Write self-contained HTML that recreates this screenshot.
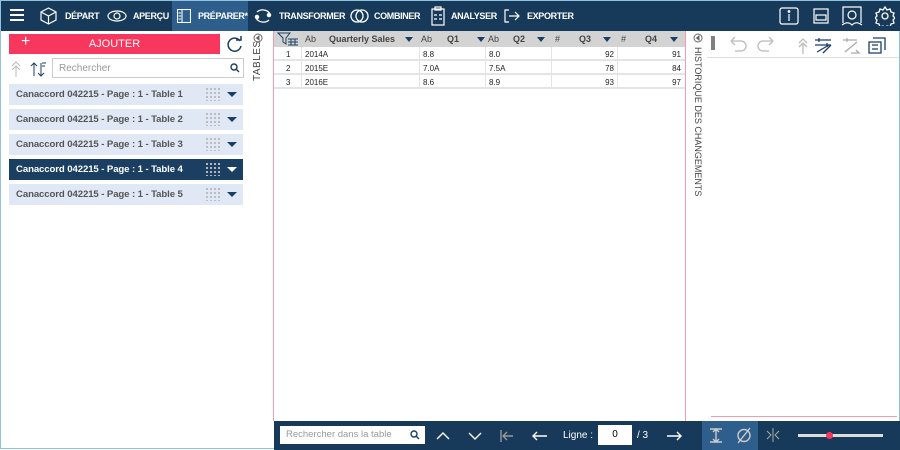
<!DOCTYPE html>
<html><head><meta charset="utf-8"><style>
*{box-sizing:border-box;margin:0;padding:0}
body{width:900px;height:449px;overflow:hidden;background:#fff;font-family:"Liberation Sans",sans-serif;position:relative;border:1px solid #8fc3e0}
.a{position:absolute}
.top{left:0;top:0;width:900px;height:30px;background:#173a5a}
.nav{color:#fff;font-size:9px;font-weight:bold;top:10px;letter-spacing:-0.35px}
.item{left:8px;width:234px;height:21px;background:#dfe8f4;color:#555;font-size:9.6px;font-weight:bold;padding:5px 0 0 7px;letter-spacing:-0.1px}
.item.sel{background:#1b3f63;color:#fff}
.tri{position:absolute;right:6px;top:8px;border-left:5px solid transparent;border-right:5px solid transparent;border-top:5px solid #1b3f63}
.sel .tri{border-top-color:#fff}
.grid{position:absolute;right:22px;top:3px;width:16px;height:14px;background-image:radial-gradient(#bbb 1px,transparent 1.3px);background-size:4px 4px}
.hd{top:30px;height:16px;background:#d3d3d3;font-size:9px;color:#444}
.ht{position:absolute;top:3px}
.dd{position:absolute;top:6px;border-left:4px solid transparent;border-right:4px solid transparent;border-top:5px solid #1b3f63}
.row{left:273px;width:411px;height:14px;border-bottom:2px solid #e4e4e4;font-size:8px;color:#222}
.row span{position:absolute;top:3px}
.vl{position:absolute;top:0;width:1px;height:14px;background:#e4e4e4}
.bb{top:420px;left:273px;width:627px;height:29px;background:#173a5a}
</style></head><body>
<div class="a top"></div>
<div class="a" style="left:171px;top:0;width:76px;height:30px;background:#2e5f8c"></div>
<svg class="a" style="left:9px;top:8px" width="14" height="12"><path d="M0 1h14M0 6h14M0 11h14" stroke="#fff" stroke-width="2"/></svg>
<svg class="a" style="left:39px;top:6px" width="17" height="18" fill="none" stroke="#fff" stroke-width="1.2"><path d="M8.5 1L16 5v8l-7.5 4L1 13V5z M1 5l7.5 4L16 5 M8.5 9v8"/></svg>
<div class="a nav" style="left:64px">DÉPART</div>
<svg class="a" style="left:106px;top:9px" width="20" height="12" fill="none" stroke="#fff" stroke-width="1.2"><ellipse cx="10" cy="6" rx="9" ry="5"/><circle cx="10" cy="6" r="3"/></svg>
<div class="a nav" style="left:132px">APERÇU</div>
<svg class="a" style="left:176px;top:8px" width="14" height="14" fill="none" stroke="#fff" stroke-width="1.1"><rect x="0.5" y="0.5" width="13" height="13"/><path d="M5 1v12M1.5 4h2.5M1.5 7h2.5M1.5 10h2.5"/></svg>
<div class="a nav" style="left:197px">PRÉPARER*</div>
<svg class="a" style="left:252px;top:6px" width="20" height="18" fill="none" stroke="#fff" stroke-width="1.3"><path d="M4 5a8 7 0 0 1 13 2M16 13a8 7 0 0 1-13-2"/><circle cx="16" cy="8" r="1.6" fill="#fff"/><circle cx="4" cy="10" r="1.6" fill="#fff"/></svg>
<div class="a nav" style="left:278px">TRANSFORMER</div>
<svg class="a" style="left:349px;top:6px" width="19" height="18" fill="none" stroke="#fff" stroke-width="1.3"><circle cx="7" cy="9" r="6"/><circle cx="12" cy="9" r="6"/></svg>
<div class="a nav" style="left:373px">COMBINER</div>
<svg class="a" style="left:430px;top:5px" width="14" height="20" fill="none" stroke="#fff" stroke-width="1.2"><rect x="1" y="3" width="12" height="16"/><rect x="4" y="1" width="6" height="3"/><path d="M3 9h3M8 9h3M3 13h3M8 13h3"/></svg>
<div class="a nav" style="left:450px">ANALYSER</div>
<svg class="a" style="left:503px;top:8px" width="16" height="14" fill="none" stroke="#fff" stroke-width="1.2"><path d="M5 1H1v12h4M5 7h10M11 3l4 4-4 4"/></svg>
<div class="a nav" style="left:526px">EXPORTER</div>
<svg class="a" style="left:778px;top:6px" width="20" height="18" fill="none" stroke="#fff" stroke-width="1.2"><rect x="1" y="1" width="18" height="16" rx="2"/><path d="M10 7v7"/><circle cx="10" cy="4.5" r="0.8" fill="#fff"/></svg>
<svg class="a" style="left:812px;top:7px" width="16" height="16" fill="none" stroke="#fff" stroke-width="1.2"><rect x="1" y="1" width="14" height="14"/><rect x="3" y="7" width="10" height="5"/></svg>
<svg class="a" style="left:840px;top:4px" width="22" height="22" fill="none" stroke="#fff" stroke-width="1.2"><path d="M2 18V2h18v16M1 20c4-3 7-3 10 0 3-3 6-3 10 0"/><circle cx="11" cy="10" r="4"/></svg>
<svg class="a" style="left:874px;top:5px" width="20" height="20" fill="none" stroke="#fff" stroke-width="1.3"><circle cx="10" cy="10" r="3"/><path d="M10 1l2 3 3-1 1 3 3 1-1 3 2 2-2 2 1 3-3 1-1 3-3-1-2 2-2-2-3 1-1-3-3-1 1-3-2-2 2-2-1-3 3-1 1-3 3 1z"/></svg>

<div class="a" style="left:8px;top:33px;width:211px;height:20px;background:#f7375e;color:#fff;font-size:11px;text-align:center;padding-top:4px">AJOUTER</div>
<div class="a" style="left:20px;top:32px;color:#fff;font-size:16px;font-weight:200">+</div>
<svg class="a" style="left:225px;top:35px" width="17" height="17" fill="none" stroke="#1b3f63" stroke-width="1.5"><path d="M14 5A6.5 6.5 0 1 0 15 10"/><path d="M10 4h5V0" /></svg>
<svg class="a" style="left:9px;top:59px" width="38" height="18" fill="none" stroke="#bbb" stroke-width="1"><path d="M6 17V6M2 10l4-4 4 4M2 6l4-4 4 4"/><path d="M24 16V3M21 6l3-3 3 3M31 3v13M28 13l3 3 3-3" stroke="#1b3f63"/><path d="M32 3h4M32 6h3" stroke="#1b3f63"/></svg>
<div class="a" style="left:51px;top:57px;width:192px;height:20px;border:1px solid #ccc;font-size:10px;color:#999;padding:4px 0 0 6px">Rechercher</div>
<svg class="a" style="left:229px;top:62px" width="10" height="10" fill="none" stroke="#1b3f63" stroke-width="1.4"><circle cx="4" cy="4" r="3"/><path d="M6 6l3 3"/></svg>
<div class="a item" style="top:83px">Canaccord 042215 - Page : 1 - Table 1<i class="grid"></i><i class="tri"></i></div>
<div class="a item" style="top:108px">Canaccord 042215 - Page : 1 - Table 2<i class="grid"></i><i class="tri"></i></div>
<div class="a item" style="top:133px">Canaccord 042215 - Page : 1 - Table 3<i class="grid"></i><i class="tri"></i></div>
<div class="a item sel" style="top:158px">Canaccord 042215 - Page : 1 - Table 4<i class="grid"></i><i class="tri"></i></div>
<div class="a item" style="top:183px">Canaccord 042215 - Page : 1 - Table 5<i class="grid"></i><i class="tri"></i></div>

<svg class="a" style="left:252px;top:32px" width="10" height="10" fill="none" stroke="#666"><circle cx="5" cy="5" r="4"/><path d="M6 3v4L3.5 5z" fill="#666"/></svg>
<div class="a" style="left:251px;top:80px;transform:rotate(-90deg);transform-origin:0 0;font-size:10px;color:#444;letter-spacing:0.5px">TABLES</div>
<div class="a" style="left:272px;top:30px;width:1px;height:390px;background:#f59ab0"></div>
<div class="a" style="left:684px;top:30px;width:1px;height:390px;background:#f59ab0"></div>

<div class="a hd" style="left:273px;width:411px">
<svg class="ht" style="left:3px;top:1px" width="22" height="14" fill="none" stroke="#1b3f63"><path d="M1 1h12l-4 5v6l-3-2V6z"/><path d="M11 7h10M11 10h10M11 13h10M14 7v6M18 7v6"/></svg>
<span class="ht" style="left:31px">Ab</span><span class="ht" style="left:55px;font-weight:bold">Quarterly Sales</span><i class="dd" style="left:131px"></i>
<span class="ht" style="left:147px">Ab</span><span class="ht" style="left:173px;font-weight:bold">Q1</span><i class="dd" style="left:203px"></i>
<span class="ht" style="left:214px">Ab</span><span class="ht" style="left:239px;font-weight:bold">Q2</span><i class="dd" style="left:263px"></i>
<span class="ht" style="left:281px">#</span><span class="ht" style="left:305px;font-weight:bold">Q3</span><i class="dd" style="left:329px"></i>
<span class="ht" style="left:347px">#</span><span class="ht" style="left:371px;font-weight:bold">Q4</span><i class="dd" style="left:396px"></i>
</div>
<div class="a row" style="top:46px"><i class="vl" style="left:27px"></i><i class="vl" style="left:145px"></i><i class="vl" style="left:211px"></i><i class="vl" style="left:277px"></i><i class="vl" style="left:343px"></i><span style="left:12px">1</span><span style="left:31px">2014A</span><span style="left:149px">8.8</span><span style="left:215px">8.0</span><span style="right:71px">92</span><span style="right:4px">91</span></div>
<div class="a row" style="top:60px"><i class="vl" style="left:27px"></i><i class="vl" style="left:145px"></i><i class="vl" style="left:211px"></i><i class="vl" style="left:277px"></i><i class="vl" style="left:343px"></i><span style="left:12px">2</span><span style="left:31px">2015E</span><span style="left:149px">7.0A</span><span style="left:215px">7.5A</span><span style="right:71px">78</span><span style="right:4px">84</span></div>
<div class="a row" style="top:74px"><i class="vl" style="left:27px"></i><i class="vl" style="left:145px"></i><i class="vl" style="left:211px"></i><i class="vl" style="left:277px"></i><i class="vl" style="left:343px"></i><span style="left:12px">3</span><span style="left:31px">2016E</span><span style="left:149px">8.6</span><span style="left:215px">8.9</span><span style="right:71px">93</span><span style="right:4px">97</span></div>

<svg class="a" style="left:692px;top:32px" width="10" height="10" fill="none" stroke="#666"><circle cx="5" cy="5" r="4"/><path d="M6 3v4L3.5 5z" fill="#666"/></svg>
<div class="a" style="left:702px;top:46px;transform:rotate(90deg);transform-origin:0 0;font-size:9px;color:#444;white-space:nowrap">HISTORIQUE DES CHANGEMENTS</div>
<div class="a" style="left:710px;top:35px;width:4px;height:14px;background-image:radial-gradient(#555 0.8px,transparent 1px);background-size:2px 2px"></div>
<svg class="a" style="left:726px;top:34px" width="170" height="20" fill="none" stroke="#bbb" stroke-width="1.3">
<path d="M4 6h10a5 5 0 0 1 0 10H8M4 6l4-4M4 6l4 4"/>
<path d="M46 6H36a5 5 0 0 0 0 10h6M46 6l-4-4M46 6l-4 4"/>
<path d="M72 8l4-4 4 4M72 12l4-4 4 4M76 8v11"/>
<g stroke="#1b3f63"><path d="M88 5h16M88 10h16M92 3v4M100 8v4M90 17l12-7M96 18l8-8"/></g>
<g stroke="#aaa"><path d="M116 5h14M120 3v4M118 17l12-10M124 18h8l-3-3"/></g>
<g stroke="#1b3f63"><path d="M146 3h12v12M142 7h12v11h-12zM145 10h6M145 14h6"/></g>
</svg>
<div class="a" style="left:706px;top:56px;width:192px;height:1px;background:#ddd"></div>
<div class="a" style="left:710px;top:415px;width:186px;height:1px;background:#f59ab0"></div>

<div class="a bb"></div>
<div class="a" style="left:701px;top:420px;width:56px;height:29px;background:#2e5f8c"></div>
<div class="a" style="left:279px;top:425px;width:145px;height:18px;background:#fff;font-size:9.5px;color:#999;padding:3px 0 0 6px">Rechercher dans la table</div>
<svg class="a" style="left:409px;top:429px" width="10" height="10" fill="none" stroke="#1b3f63" stroke-width="1.4"><circle cx="4" cy="4" r="3"/><path d="M6 6l3 3"/></svg>
<svg class="a" style="left:430px;top:422px" width="330" height="25" fill="none" stroke="#fff" stroke-width="1.4">
<path d="M6 16l6-6 6 6"/><path d="M38 10l6 6 6-6"/>
<path d="M70 7v12M82 13H72M76 9l-4 4 4 4" stroke="#999"/>
<path d="M116 13h-14M106 9l-4 4 4 4"/>
<path d="M236 13h14M246 9l4 4-4 4"/>
<path d="M279 6h12M279 19h12M285 6v13M282 9l3-3 3 3M282 16l3 3 3-3" stroke="#ccc"/>
<circle cx="313" cy="12.5" r="6" stroke="#ccc"/><path d="M307 20l12-15" stroke="#ccc"/>
</svg>
<div class="a" style="left:562px;top:429px;color:#fff;font-size:10px">Ligne :</div>
<div class="a" style="left:597px;top:424px;width:34px;height:20px;background:#fff;font-size:10px;text-align:center;padding-top:4px">0</div>
<div class="a" style="left:636px;top:429px;color:#fff;font-size:10px">/ 3</div>
<svg class="a" style="left:764px;top:426px" width="16" height="16" fill="none" stroke="#aaa"><path d="M8 1v14M2 4l4 4-4 4M14 4l-4 4 4 4"/></svg>
<div class="a" style="left:797px;top:433px;width:85px;height:3px;background:#ddd"></div>
<div class="a" style="left:825px;top:431px;width:7px;height:7px;border-radius:50%;background:#f7375e"></div>
</body></html>
